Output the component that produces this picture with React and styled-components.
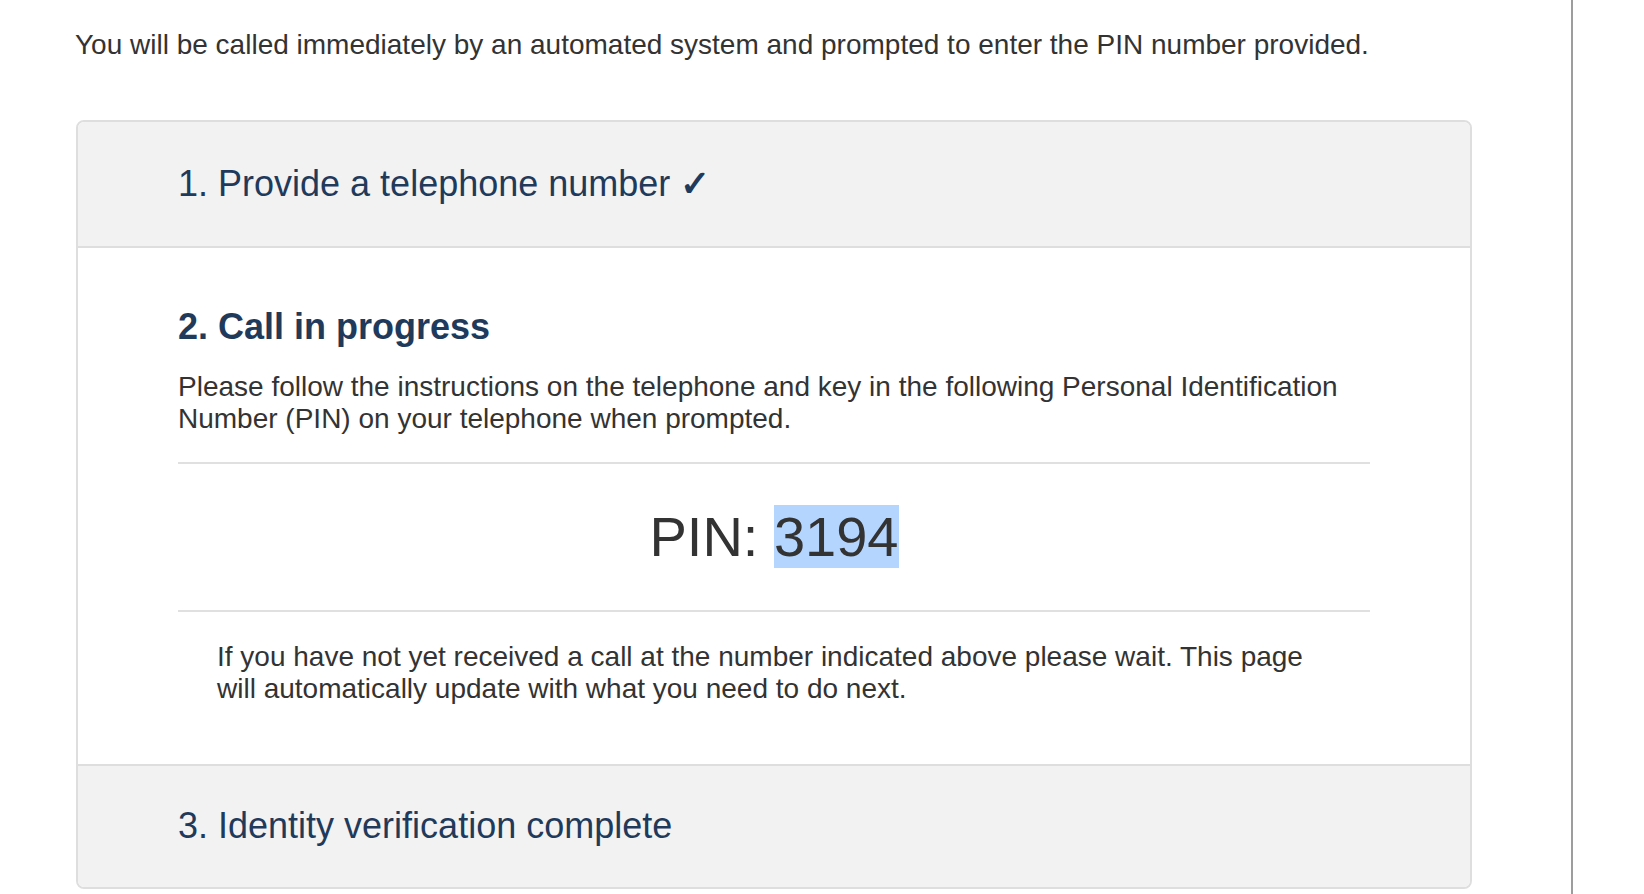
import styled, { createGlobalStyle } from 'styled-components';

const GlobalStyle = createGlobalStyle`
    html, body {
        margin: 0;
        padding: 0;
        background: #fff;
    }
    body {
        font-family: "Liberation Sans", Arial, Helvetica, sans-serif;
        color: #333;
    }
`

const Page = () => {
    return (
        <>
            <GlobalStyle />
            <Frame>
                <Main>
                    <Intro>You will be called immediately by an automated system and prompted to enter the PIN number provided.</Intro>
                    <Steps>
                        <StepHeader>
                            <StepTitle>1. Provide a telephone number <Check>✓</Check></StepTitle>
                        </StepHeader>
                        <StepBody>
                            <ActiveTitle>2. Call in progress</ActiveTitle>
                            <Text>Please follow the instructions on the telephone and key in the following Personal Identification Number (PIN) on your telephone when prompted.</Text>
                            <PinBox>
                                <Pin>PIN: <Selected>3194</Selected></Pin>
                            </PinBox>
                            <Note>If you have not yet received a call at the number indicated above please wait. This page will automatically update with what you need to do next.</Note>
                        </StepBody>
                        <StepHeader last>
                            <StepTitle>3. Identity verification complete</StepTitle>
                        </StepHeader>
                    </Steps>
                </Main>
            </Frame>
        </>
    )
}

const Frame = styled.div`
    display: flex;
    min-height: 894px;
`

const Main = styled.div`
    width: 1573px;
    box-sizing: border-box;
    border-right: 2px solid #9d9d9d;
    padding: 29px 0 0 75px;
`

const Intro = styled.p`
    margin: 0;
    font-size: 28px;
    line-height: 32px;
    color: #333;
`

const Steps = styled.div`
    margin-top: 59px;
    width: 1392px;
    margin-left: 1px;
    border: 2px solid #dedede;
    border-radius: 8px;
    overflow: hidden;
`

const StepHeader = styled.div`
    background: #f2f2f2;
    padding: ${props => props.last ? '38px 100px 39px' : '40px 100px'};
    border-bottom: ${props => props.last ? 'none' : '2px solid #dedede'};
    border-top: ${props => props.last ? '2px solid #dedede' : 'none'};
`

const StepTitle = styled.h3`
    margin: 0;
    font-size: 36px;
    line-height: 44px;
    font-weight: normal;
    color: #1f3a5b;
`

const Check = styled.span`
    font-weight: bold;
`

const StepBody = styled.div`
    background: #fff;
    padding: 59px 100px 59px;
`

const ActiveTitle = styled.h3`
    margin: 0 0 24px;
    font-size: 36px;
    line-height: 40px;
    font-weight: bold;
    color: #1f3a5b;
`

const Text = styled.p`
    margin: 0;
    font-size: 28px;
    line-height: 32px;
    color: #333;
`

const PinBox = styled.div`
    margin-top: 27px;
    border-top: 2px solid #e0e0e0;
    border-bottom: 2px solid #e0e0e0;
    height: 146px;
    display: flex;
    align-items: center;
    justify-content: center;
`

const Pin = styled.div`
    font-size: 56px;
    line-height: 62px;
    color: #333;
`

const Selected = styled.span`
    background: #b4d5fe;
`

const Note = styled.p`
    margin: 29px 0 0;
    padding: 0 39px;
    font-size: 28px;
    line-height: 32px;
    color: #333;
`

export default Page
